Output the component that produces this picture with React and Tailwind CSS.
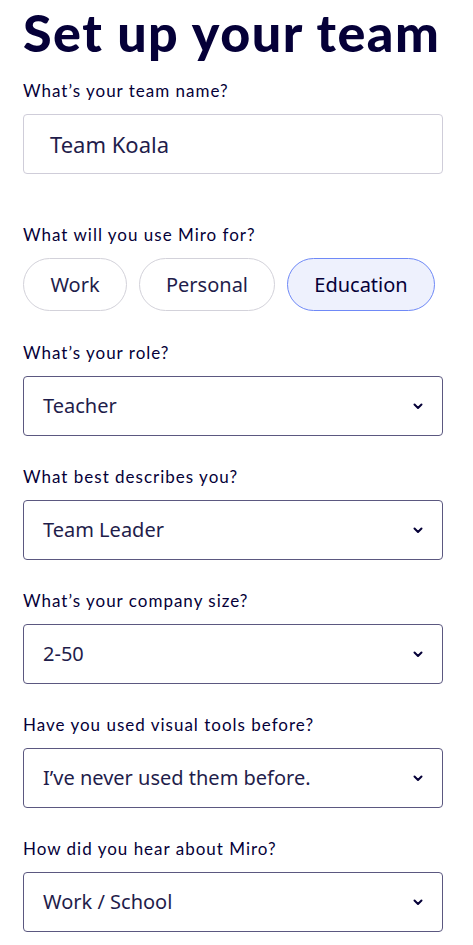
import React from "react";

const Chevron = () => (
  <svg width="10" height="7" viewBox="0 0 10 7" className="shrink-0">
    <path d="M1.5 1.5 L5 5 L8.5 1.5" fill="none" stroke="#050038" strokeWidth="2" strokeLinecap="round" strokeLinejoin="round" />
  </svg>
);

const Label = ({ children }) => (
  <div className="text-[17px] leading-[22px] text-[#050038] font-['Lato',sans-serif] tracking-[1px]">{children}</div>
);

const Select = ({ value }) => (
  <div className="mt-[12px] h-[60px] w-[420px] border border-[#5b5880] rounded-[4px] flex items-center justify-between pl-[19px] pr-[19px] bg-white">
    <span className="text-[20px] text-[#1f1d4b] font-['Noto_Sans',sans-serif]">{value}</span>
    <Chevron />
  </div>
);

export default function App() {
  const fields = [
    ["What\u2019s your role?", "Teacher"],
    ["What best describes you?", "Team Leader"],
    ["What\u2019s your company size?", "2-50"],
    ["Have you used visual tools before?", "I\u2019ve never used them before."],
    ["How did you hear about Miro?", "Work / School"],
  ];
  return (
    <div className="w-[473px] h-[945px] bg-white overflow-hidden pl-[23px]">
      <h1 className="text-[52px] leading-[60px] pt-[2px] font-black text-[#050038] font-['Lato',sans-serif] tracking-[1.5px] whitespace-nowrap">Set up your team</h1>
      <div className="mt-[18px]">
        <Label>What’s your team name?</Label>
        <div className="mt-[12px] h-[60px] w-[420px] border border-[#cfcdd9] rounded-[4px] flex items-center pl-[26px]">
          <span className="text-[22px] text-[#1f1d4b] font-['Noto_Sans',sans-serif]">Team Koala</span>
        </div>
      </div>
      <div className="mt-[50px]">
        <Label>What will you use Miro for?</Label>
        <div className="mt-[12px] flex gap-[12px]">
          <div className="h-[53px] w-[104px] rounded-full border border-[#d3d2da] flex items-center justify-center text-[20px] text-[#1f1d4b] font-['Noto_Sans',sans-serif]">Work</div>
          <div className="h-[53px] w-[136px] rounded-full border border-[#d3d2da] flex items-center justify-center text-[20px] text-[#1f1d4b] font-['Noto_Sans',sans-serif]">Personal</div>
          <div className="h-[53px] w-[148px] rounded-full border border-[#6f89f7] bg-[#eef1fd] flex items-center justify-center text-[20px] text-[#050038] font-['Noto_Sans',sans-serif]">Education</div>
        </div>
      </div>
      {fields.map(([l, v], i) => (
        <div key={i} className={i === 0 ? "mt-[31px]" : "mt-[30px]"}>
          <Label>{l}</Label>
          <Select value={v} />
        </div>
      ))}
    </div>
  );
}
